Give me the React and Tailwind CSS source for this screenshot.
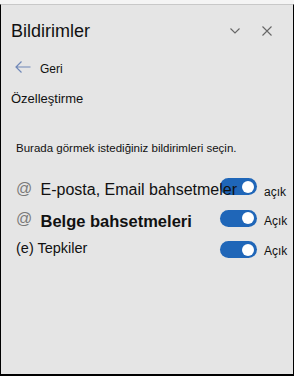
import React from "react";

function Toggle() {
  return (
    <div className="w-[37px] h-[17px] rounded-full bg-[#1f66b8] flex items-center justify-end pr-[3px] shrink-0 self-center">
      <div className="w-[12px] h-[12px] rounded-full bg-white" />
    </div>
  );
}

export default function App() {
  return (
    <div
      className="w-[294px] h-[376px] flex flex-col bg-[#f4f4f4] text-[#111]"
      style={{ fontFamily: '"Liberation Sans", Arial, sans-serif' }}
    >
      <div className="h-[4px] shrink-0" />
      <div className="flex-1 flex flex-col bg-[#e5e5e5] border-t border-t-[#c8c8c8] border-x border-x-black border-b-2 border-b-black">
        {/* Title */}
        <div className="mt-[14px] h-[24px] flex items-center pl-[10px] pr-[21px]">
          <div className="text-[18px] leading-[24px]">Bildirimler</div>
          <div className="ml-auto flex items-center gap-[22px]">
            <svg width="10" height="6" viewBox="0 0 10 6" fill="none">
              <path d="M0.5 0.5 L5 5 L9.5 0.5" stroke="#666" strokeWidth="1.1" />
            </svg>
            <svg width="10" height="10" viewBox="0 0 10 10" fill="none">
              <path d="M0.5 0.5 L9.5 9.5 M9.5 0.5 L0.5 9.5" stroke="#666" strokeWidth="1.1" />
            </svg>
          </div>
        </div>

        {/* Back */}
        <div className="mt-[18px] h-[16px] flex items-start pl-[14px]">
          <svg width="16" height="12" viewBox="0 0 16 12" fill="none">
            <path d="M15.5 6 H1 M6.5 0.5 L1 6 L6.5 11.5" stroke="#7088b8" strokeWidth="1.2" />
          </svg>
          <div className="ml-[9px] text-[12px] leading-[16px]">Geri</div>
        </div>

        {/* Section */}
        <div className="mt-[13px] pl-[10px] text-[13px] leading-[18px]">Özelleştirme</div>

        <div className="mt-[32px] pl-[15px] text-[11.5px] leading-[16px] whitespace-nowrap">
          Burada görmek istediğiniz bildirimleri seçin.
        </div>

        {/* Rows */}
        <div className="mt-[15px] flex flex-col pl-[15px]">
          <div className="h-[31.5px] flex items-start">
            <div className="w-[24.5px] shrink-0 mt-[8px] text-[16px] leading-[20px] text-[#7a7a7a]">@</div>
            <div className="w-[179.5px] shrink-0 mt-[9.25px] text-[16px] leading-[20px] whitespace-nowrap">
              <span className="relative z-10">E-posta, Email bahsetmeler</span>
            </div>
            <Toggle />
            <div className="ml-[7px] mt-[12.5px] text-[12px] leading-[16px]">açık</div>
          </div>

          <div className="h-[31.5px] flex items-start">
            <div className="w-[24.5px] shrink-0 mt-[6px] text-[16px] leading-[20px] text-[#7a7a7a]">@</div>
            <div className="w-[179.5px] shrink-0 mt-[8.25px] text-[16.5px] leading-[20px] font-bold whitespace-nowrap">
              Belge bahsetmeleri
            </div>
            <Toggle />
            <div className="ml-[7px] mt-[10.8px] text-[12px] leading-[16px]">Açık</div>
          </div>

          <div className="h-[31.5px] flex items-start">
            <div className="w-[204px] shrink-0 mt-[5px] text-[14.5px] leading-[18px] whitespace-nowrap">
              (e) Tepkiler
            </div>
            <Toggle />
            <div className="ml-[7px] mt-[9.3px] text-[12px] leading-[16px]">Açık</div>
          </div>
        </div>
      </div>
    </div>
  );
}
